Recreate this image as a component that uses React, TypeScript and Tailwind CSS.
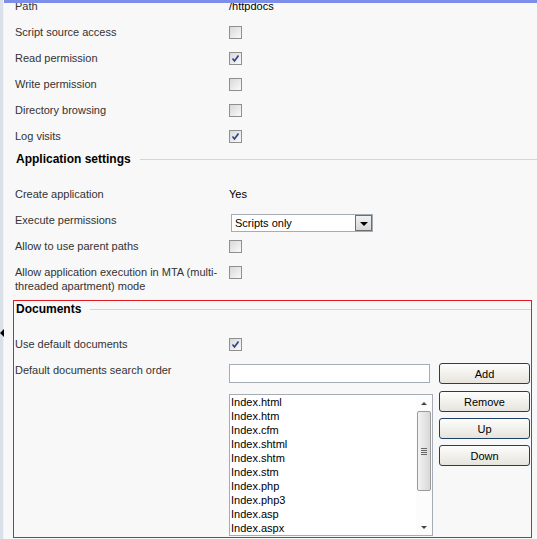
import React from "react";

const Check = ({ checked }: { checked?: boolean }) => (
  <div className="w-[13px] h-[13px] border border-[#8e8f8f] bg-gradient-to-br from-[#d8d8d8] to-[#fafafa] flex items-center justify-center">
    {checked && (
      <svg width="9" height="9" viewBox="0 0 9 9">
        <path d="M1.5 4.5 L3.5 7 L7.5 1.5" stroke="#2a3f8f" strokeWidth="1.6" fill="none" />
      </svg>
    )}
  </div>
);

const Row = ({ label, children }: { label: React.ReactNode; children?: React.ReactNode }) => (
  <div className="flex items-center h-[26px]">
    <div className="w-[225px] pl-[11px] text-[#333]">{label}</div>
    <div className="flex items-center text-black">{children}</div>
  </div>
);

const Btn = ({ children }: { children: React.ReactNode }) => (
  <div className="w-[91px] h-[21px] border border-[#1f3f66] rounded-[3px] bg-gradient-to-b from-[#fdfdfc] to-[#e6e4dc] flex items-center justify-center text-black">
    {children}
  </div>
);

const files = [
  "Index.html",
  "Index.htm",
  "Index.cfm",
  "Index.shtml",
  "Index.shtm",
  "Index.stm",
  "Index.php",
  "Index.php3",
  "Index.asp",
  "Index.aspx",
];

export default function App() {
  return (
    <div
      className="w-[537px] h-[539px] overflow-hidden bg-[#f8f8f8] flex relative text-[11px] leading-[14px]"
      style={{ fontFamily: '"Liberation Sans", Arial, sans-serif' }}
    >
      <div className="w-[4px] bg-[#dbe1e9] border-r border-[#eef1f5] shrink-0" />
      <div className="absolute left-0 top-[329px] w-0 h-0 border-y-[4px] border-y-transparent border-r-[4px] border-r-black" />
      <div className="flex-1 flex flex-col relative">
        <div className="h-[3px] bg-[#7d8ee8] shrink-0 relative z-10" />
        <div className="mt-[-10px]">
          <Row label="Path">/httpdocs</Row>
          <Row label="Script source access"><Check /></Row>
          <Row label="Read permission"><Check checked /></Row>
          <Row label="Write permission"><Check /></Row>
          <Row label="Directory browsing"><Check /></Row>
          <Row label="Log visits"><Check checked /></Row>
        </div>
        <div className="flex items-center h-[20px]">
          <div className="pl-[12px] font-bold text-black text-[12px]">Application settings</div>
          <div className="flex-1 h-px bg-[#d4d4d4] ml-[9px]" />
        </div>
        <div className="mt-[12px]">
          <Row label="Create application">Yes</Row>
          <Row label="Execute permissions">
            <div className="ml-[2px] mt-[6px] w-[142px] h-[18px] border border-[#a5acb5] bg-white flex items-center">
              <span className="flex-1 pl-[3px]">Scripts only</span>
              <div className="w-[17px] h-[16px] border border-[#6e6e6e] bg-gradient-to-b from-[#f2f2f2] to-[#d6d6d6] flex items-center justify-center">
                <div className="w-0 h-0 border-x-[4px] border-x-transparent border-t-[4px] border-t-black mt-[2px]" />
              </div>
            </div>
          </Row>
          <Row label="Allow to use parent paths"><Check /></Row>
          <div className="flex items-start pt-[6px]">
            <div className="w-[225px] pl-[11px] text-[#333]">
              Allow application execution in MTA (multi-
              <br />
              threaded apartment) mode
            </div>
            <div className="mt-[1px]"><Check /></div>
          </div>
        </div>
        <div className="ml-[9px] mr-[5px] mt-[7px] h-[238px] border border-[#e31b23] flex flex-col">
          <div className="flex items-center h-[16px]">
            <div className="pl-[2px] font-bold text-black text-[12px]">Documents</div>
            <div className="flex-1 h-px bg-[#d4d4d4] ml-[9px]" />
          </div>
          <div className="flex items-center h-[26px] mt-[14px]">
            <div className="w-[215px] pl-[1px] text-[#333]">Use default documents</div>
            <Check checked />
          </div>
          <div className="flex mt-[7px]">
            <div className="w-[215px] pl-[1px] text-[#333] -mt-[1px]">Default documents search order</div>
            <div className="flex flex-col w-[203px]">
              <div className="w-[201px] h-[19px] border border-[#a5acb5] bg-white" />
              <div className="mt-[11px] w-[204px] h-[142px] border border-[#a5acb5] bg-white flex">
                <div className="flex-1 pl-[1px] text-black">
                  {files.map((f) => (
                    <div key={f} className="h-[14px] leading-[14px]">{f}</div>
                  ))}
                </div>
                <div className="w-[16px] flex flex-col items-center bg-[#fcfcfc]">
                  <div className="h-[16px] flex items-center justify-center">
                    <div className="w-0 h-0 border-x-[3px] border-x-transparent border-b-[3px] border-b-[#444]" />
                  </div>
                  <div className="w-[14px] h-[80px] border border-[#9a9a9a] rounded-[2px] bg-gradient-to-r from-[#f2f2f2] to-[#d8d8d8] flex flex-col items-center justify-center gap-[1px]">
                    <div className="w-[6px] h-px bg-[#666]" />
                    <div className="w-[6px] h-px bg-[#666]" />
                    <div className="w-[6px] h-px bg-[#666]" />
                    <div className="w-[6px] h-px bg-[#666]" />
                  </div>
                  <div className="flex-1" />
                  <div className="h-[16px] flex items-center justify-center">
                    <div className="w-0 h-0 border-x-[3px] border-x-transparent border-t-[3px] border-t-[#444]" />
                  </div>
                </div>
              </div>
            </div>
            <div className="ml-[7px] -mt-[1px] flex flex-col">
              <Btn>Add</Btn>
              <div className="mt-[7px] flex flex-col gap-[6px]">
                <Btn>Remove</Btn>
                <Btn>Up</Btn>
                <Btn>Down</Btn>
              </div>
            </div>
          </div>
        </div>
      </div>
    </div>
  );
}
